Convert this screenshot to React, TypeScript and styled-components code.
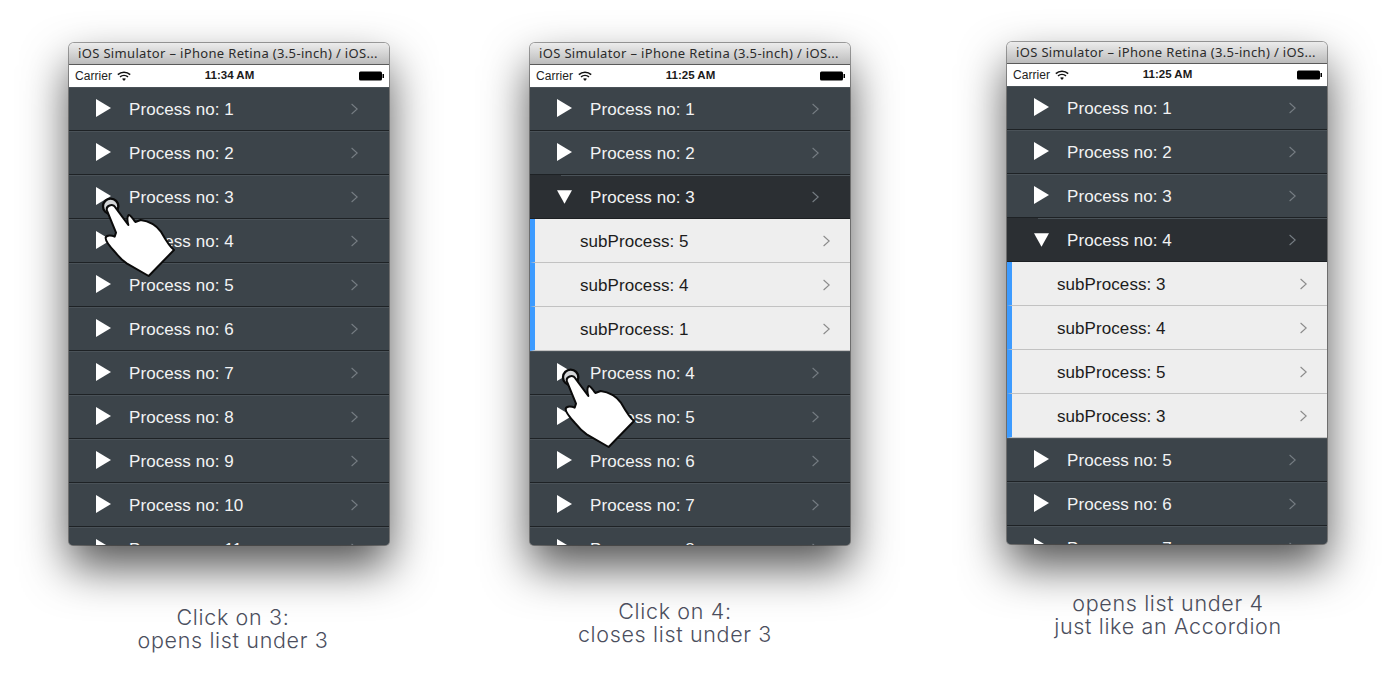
import React from "react";
import styled, { createGlobalStyle } from "styled-components";

const Global = createGlobalStyle`
  html, body { margin: 0; padding: 0; background: #fff; }
  body { width: 1400px; height: 700px; overflow: hidden; }
`;

const Stage = styled.main`
  display: flex;
  align-items: flex-start;
  width: 1400px;
  height: 700px;
  padding: 42px 0 0 69px;
  box-sizing: border-box;
  overflow: hidden;
`;

const Column = styled.section<{ $left: number; $top: number }>`
  display: flex;
  flex-direction: column;
  width: 320px;
  margin-left: ${(p) => p.$left}px;
  margin-top: ${(p) => p.$top}px;
`;

const Phone = styled.div`
  position: relative;
  display: flex;
  flex-direction: column;
  width: 320px;
  height: 502px;
  border-radius: 5px 5px 4px 4px;
  box-shadow: 0 22px 46px rgba(0, 0, 0, 0.68), 0 0 0 1px rgba(90, 90, 90, 0.55);
`;

const Screen = styled.div`
  display: flex;
  flex-direction: column;
  height: 100%;
  border-radius: inherit;
  overflow: hidden;
`;

const TitleBar = styled.div`
  flex: none;
  height: 22px;
  line-height: 21px;
  padding-left: 9px;
  box-sizing: border-box;
  font-family: "Noto Sans", sans-serif;
  font-size: 13px;
  letter-spacing: 0.34px;
  color: #2b2b2b;
  white-space: nowrap;
  background: linear-gradient(#ececec, #bcbcbc);
  border-bottom: 1px solid #5a5a5a;
`;

const StatusBar = styled.div`
  flex: none;
  display: grid;
  grid-template-columns: 1fr auto 1fr;
  align-items: center;
  height: 22px;
  padding: 0 5px 0 6px;
  box-sizing: border-box;
  background: #fff;
  font-family: "Liberation Sans", Arial, sans-serif;
  font-size: 12px;
  color: #222;
`;

const Carrier = styled.div`
  display: flex;
  align-items: center;
  gap: 5px;
  letter-spacing: 0.05px;
`;

const Time = styled.div`
  font-weight: 700;
  font-size: 11.5px;
  line-height: 12px;
  padding-bottom: 2px;
  color: #1a1a1a;
`;

const BatteryWrap = styled.div`
  display: flex;
  justify-content: flex-end;
`;

const List = styled.div`
  flex: 1;
  min-height: 0;
  overflow: hidden;
  background: #3c444a;
`;

const Row = styled.div<{ $open?: boolean }>`
  position: relative;
  display: flex;
  align-items: center;
  height: 44px;
  padding: 0 31px 0 27px;
  box-sizing: border-box;
  background: ${(p) => (p.$open ? "#2b2f33" : "#3c444a")};
  border-bottom: 1px solid ${(p) => (p.$open ? "#1c1f22" : "#1e2225")};
  box-shadow: inset 0 1px 0 ${(p) => (p.$open ? "#2b2f33" : "#4a5258")};
`;

const RowLight = styled.span`
  position: absolute;
  top: 0;
  left: 31px;
  right: 0;
  height: 1px;
  background: #4a5258;
`;

const Marker = styled.span<{ $open?: boolean }>`
  flex: none;
  display: flex;
  align-items: center;
  justify-content: center;
  width: 15px;
  margin-right: 18px;
  padding-top: ${(p) => (p.$open ? "1px" : "0")};
  padding-bottom: ${(p) => (p.$open ? "0" : "1px")};
`;

const RowLabel = styled.span`
  flex: 1;
  padding-top: 2px;
  font-family: "Liberation Sans", Arial, sans-serif;
  font-size: 17px;
  letter-spacing: 0.07px;
  color: #f2f3f4;
`;

const SubRow = styled.div`
  display: flex;
  align-items: center;
  height: 44px;
  padding: 0 20px 0 45px;
  box-sizing: border-box;
  background: #eeeeee;
  border-left: 5px solid #3d9bff;
  border-bottom: 1px solid #c2c2c2;
`;

const SubLabel = styled.span`
  flex: 1;
  padding-top: 2px;
  font-family: "Liberation Sans", Arial, sans-serif;
  font-size: 17px;
  letter-spacing: 0.07px;
  color: #1c1c1c;
`;

const Caption = styled.p<{ $top: number; $shift: number }>`
  margin: ${(p) => p.$top}px 0 0 ${(p) => p.$shift}px;
  width: 320px;
  font-family: Inter, "Liberation Sans", sans-serif;
  font-weight: 350;
  font-size: 21.5px;
  line-height: 23px;
  letter-spacing: 0.66px;
  text-align: center;
  white-space: nowrap;
  color: #4c4f5e;
`;

const HandSvg = styled.svg<{ $left: number; $top: number }>`
  position: absolute;
  left: ${(p) => p.$left}px;
  top: ${(p) => p.$top}px;
`;

const PlayIcon = () => (
  <svg width="15" height="18" viewBox="0 0 15 18">
    <path d="M0 0 L15 9 L0 18 Z" fill="#fff" />
  </svg>
);

const DownIcon = () => (
  <svg width="18" height="16" viewBox="0 0 18 16">
    <path d="M0 0 L18 0 L9 16 Z" fill="#fff" />
  </svg>
);

const Chevron = ({ color }: { color: string }) => (
  <svg width="8" height="12" viewBox="0 0 8 12">
    <path d="M1.6 1 L7.2 6 L1.6 11" fill="none" stroke={color} strokeWidth="1.1" />
  </svg>
);

const Wifi = () => (
  <svg width="14" height="10" viewBox="0 0 14 10">
    <path d="M0.8 3.6 C4.3 0.3 9.7 0.3 13.2 3.6" fill="none" stroke="#111" strokeWidth="1.5" />
    <path d="M3 5.8 C5.3 3.9 8.7 3.9 11 5.8" fill="none" stroke="#111" strokeWidth="1.5" />
    <path d="M5 7.8 C6.2 6.9 7.8 6.9 9 7.8 L7 10 Z" fill="#111" />
  </svg>
);

const Battery = () => (
  <svg width="25" height="10" viewBox="0 0 25 10">
    <rect x="0" y="0.5" width="23" height="9" rx="1.5" fill="#000" />
    <rect x="23.5" y="3" width="1.5" height="4" fill="#000" />
  </svg>
);

const Hand = ({ left, top }: { left: number; top: number }) => (
  <HandSvg $left={left} $top={top} width="90" height="90" viewBox="0 0 270 270">
    <circle cx="62" cy="49" r="23" fill="#d4d6d8" stroke="#0a0a0a" strokeWidth="7" />
    <path
      d="M51 62 C46 48 68 38 76 52 L115 105 C112 94 111 80 116 75 C122 74 128 86 136 96 L152 90 C180 94 200 108 212 124 C228 152 240 172 252 180 L176 258 L110 220 C92 208 86 200 75 186 C60 170 46 150 47 143 C50 134 66 136 74 140 L78 128 Z"
      fill="#fff"
      stroke="#0a0a0a"
      strokeWidth="6"
      strokeLinejoin="round"
    />
  </HandSvg>
);

type Item = { n: number; open?: boolean; subs?: number[] };

const phones: {
  left: number;
  top: number;
  time: string;
  items: Item[];
  hand?: { left: number; top: number };
  captionTop: number;
  shift: number;
  caption: [string, string];
}[] = [
  {
    left: 0,
    top: 1,
    time: "11:34 AM",
    items: [1, 2, 3, 4, 5, 6, 7, 8, 9, 10, 11].map((n) => ({ n })),
    hand: { left: 21, top: 147 },
    captionTop: 61,
    shift: 4,
    caption: ["Click on 3:", "opens list under 3"],
  },
  {
    left: 141,
    top: 1,
    time: "11:25 AM",
    items: [
      { n: 1 },
      { n: 2 },
      { n: 3, open: true, subs: [5, 4, 1] },
      { n: 4 },
      { n: 5 },
      { n: 6 },
      { n: 7 },
      { n: 8 },
    ],
    hand: { left: 20, top: 318 },
    captionTop: 55,
    shift: -15,
    caption: ["Click on 4:", "closes list under 3"],
  },
  {
    left: 157,
    top: 0,
    time: "11:25 AM",
    items: [
      { n: 1 },
      { n: 2 },
      { n: 3 },
      { n: 4, open: true, subs: [3, 4, 5, 3] },
      { n: 5 },
      { n: 6 },
      { n: 7 },
    ],
    captionTop: 48,
    shift: 1,
    caption: ["opens list under 4", "just like an Accordion"],
  },
];

export default function App() {
  return (
    <>
      <Global />
      <Stage>
        {phones.map((p, i) => (
          <Column key={i} $left={p.left} $top={p.top}>
            <Phone>
              <Screen>
                <TitleBar>iOS Simulator – iPhone Retina (3.5-inch) / iOS...</TitleBar>
                <StatusBar>
                  <Carrier>
                    Carrier <Wifi />
                  </Carrier>
                  <Time>{p.time}</Time>
                  <BatteryWrap>
                    <Battery />
                  </BatteryWrap>
                </StatusBar>
                <List>
                  {p.items.map((it) => (
                    <React.Fragment key={it.n}>
                      <Row $open={it.open}>
                        {it.open && <RowLight />}
                        <Marker $open={it.open}>{it.open ? <DownIcon /> : <PlayIcon />}</Marker>
                        <RowLabel>Process no: {it.n}</RowLabel>
                        <Chevron color="#767d83" />
                      </Row>
                      {it.subs?.map((s, j) => (
                        <SubRow key={j}>
                          <SubLabel>subProcess: {s}</SubLabel>
                          <Chevron color="#8a8a8a" />
                        </SubRow>
                      ))}
                    </React.Fragment>
                  ))}
                </List>
              </Screen>
              {p.hand && <Hand left={p.hand.left} top={p.hand.top} />}
            </Phone>
            <Caption $top={p.captionTop} $shift={p.shift}>
              {p.caption[0]}
              <br />
              {p.caption[1]}
            </Caption>
          </Column>
        ))}
      </Stage>
    </>
  );
}
